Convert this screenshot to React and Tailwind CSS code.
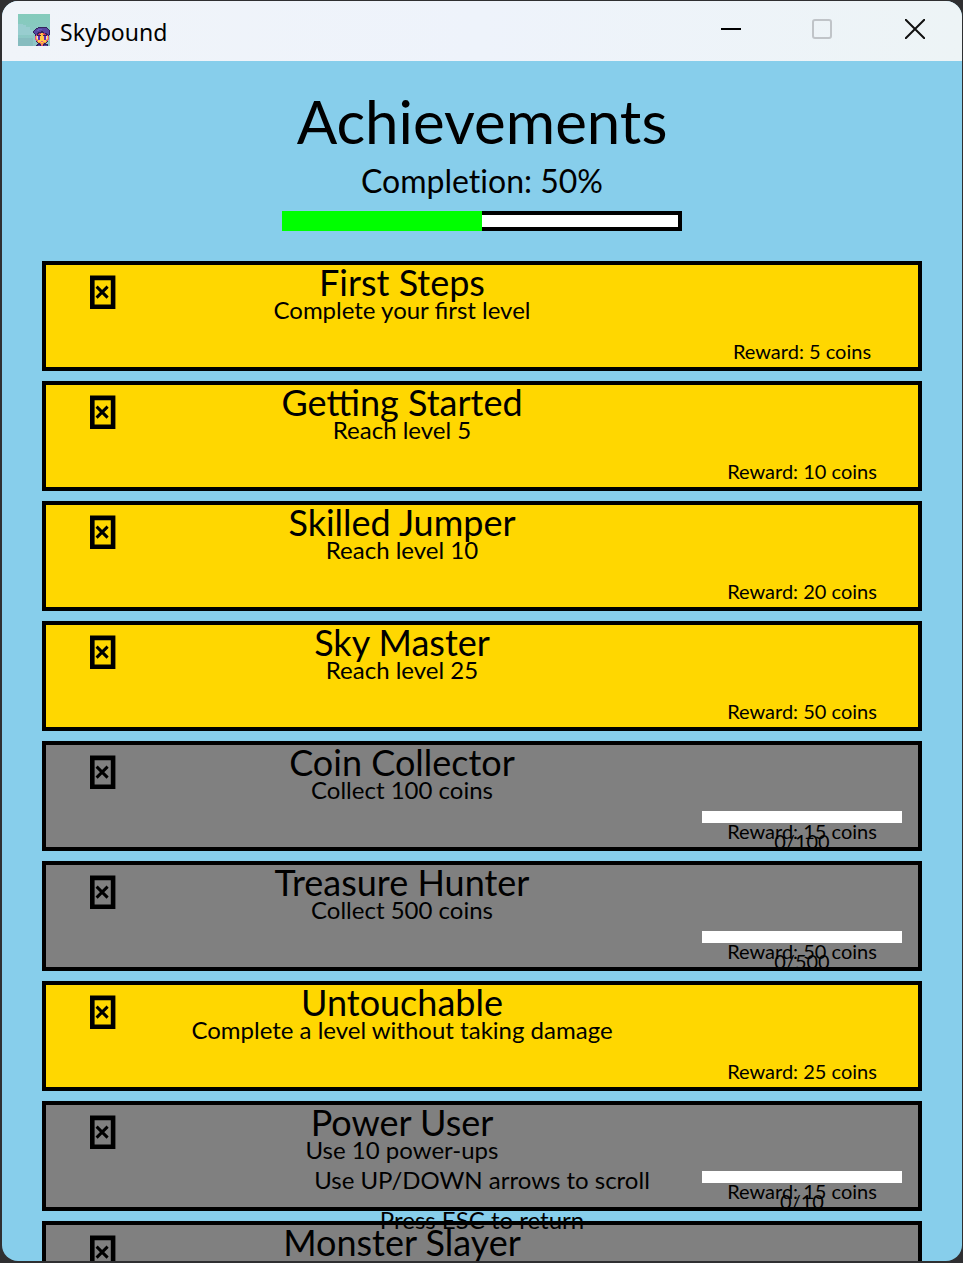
const ACHIEVEMENTS = [
  { title: "First Steps", text: "Complete your first level", reward: 5, done: true },
  { title: "Getting Started", text: "Reach level 5", reward: 10, done: true },
  { title: "Skilled Jumper", text: "Reach level 10", reward: 20, done: true },
  { title: "Sky Master", text: "Reach level 25", reward: 50, done: true },
  { title: "Coin Collector", text: "Collect 100 coins", reward: 15, goal: 100 },
  { title: "Treasure Hunter", text: "Collect 500 coins", reward: 50, goal: 500 },
  { title: "Untouchable", text: "Complete a level without taking damage", reward: 25, done: true },
  { title: "Power User", text: "Use 10 power-ups", reward: 15, goal: 10 },
  { title: "Monster Slayer", text: "", reward: null },
];

const SPRITE_COLORS = {
  d: "#33235c",
  h: "#5546a0",
  l: "#6b58b8",
  r: "#c9305e",
  y: "#ffc94a",
  o: "#f2963f",
  p: "#6230b0",
  w: "#e2cdf0",
  k: "#e0508a",
};

// Hero's head, one letter per pixel.
const SPRITE = [
  ".....ddddddddd...",
  "...ddhhhhhhhhhd..",
  "..dhhllllhhhhhhd.",
  ".dhhllhhhhhhhhhhd",
  "dhhhhhhhddhhhhhhd",
  "dhhhhddddddhhhhhd",
  ".dhhddrryyrrddhhd",
  "..dhdrryyoorrddhd",
  "..dkddddyyddddkd.",
  "..kywppyyyyppwyk.",
  "..kywppyyyyppwyk.",
  "..kywppyyyyppwyk.",
  "..koyppyyyyppyok.",
  "...kkyyyyyyyykk..",
  "...doyyykkyyyod..",
  "....doooyyoood...",
  ".....ddkookdd....",
  "....ddddooddddd..",
  "...ddhhdkkdhhhd..",
];

function AppIcon() {
  return (
    <svg viewBox="0 0 32 32" className="size-8" shapeRendering="crispEdges" aria-hidden="true">
      <defs>
        <linearGradient id="sky" x1="0" y1="0" x2="0" y2="1">
          <stop offset="0" stopColor="#84cbbb" />
          <stop offset="1" stopColor="#8fc6c9" />
        </linearGradient>
      </defs>
      <path fill="url(#sky)" d="M0 0h32v32H0z" />
      <path fill="#98cdcf" d="M0 10h5v1h3v2h4v3h3v5H0z" />
      <path fill="#86bcbf" d="M0 24h15v8H0z" />
      {SPRITE.map((row, y) =>
        [...row].map((cell, x) =>
          cell === "." ? null : (
            <rect key={x + "-" + y} x={15 + x} y={13 + y} width="1" height="1" fill={SPRITE_COLORS[cell]} />
          )
        )
      )}
    </svg>
  );
}

function MissingGlyph() {
  return (
    <svg viewBox="0 0 26 34" className="h-[34px] w-[26px]" fill="none" stroke="#000" aria-hidden="true">
      <path strokeWidth="4.6" d="M2.3 2.9h20.8v28.8H2.3z" />
      <path strokeWidth="3" d="M6.6 11.6l11 11M17.6 11.6l-11 11" />
    </svg>
  );
}

function Card({ title, text, reward, done, goal }) {
  return (
    <li
      className={
        "grid h-[110px] shrink-0 grid-cols-1 grid-rows-1 overflow-hidden border-4 border-black " +
        (done ? "bg-[#ffd700]" : "bg-[#808080]")
      }
    >
      <div className="col-start-1 row-start-1 ml-11 mt-[10px]">
        <MissingGlyph />
      </div>
      <div className="col-start-1 row-start-1 pr-[160px] text-center">
        <h2 className="h-8 text-4xl leading-[34px]">{title}</h2>
        <p className="text-2xl leading-[26px]">{text}</p>
      </div>
      {reward !== null && (
        <div className="col-start-1 row-start-1 mr-4 mt-[66px] w-[200px] justify-self-end text-center text-xl">
          <div className={"h-3 " + (goal ? "bg-white" : "")} />
          <p className="h-[10px] leading-4">Reward: {reward} coins</p>
          {goal && <p className="leading-4">0/{goal}</p>}
        </div>
      )}
    </li>
  );
}

export default function App() {
  return (
    <div className="h-screen bg-[#2f2f31] pb-[2px] pl-[2px] pr-px pt-px font-['Lato',sans-serif] text-black">
      <div className="flex h-full flex-col overflow-hidden rounded-2xl bg-[#87ceeb]">
        <header className="flex h-[60px] shrink-0 items-center justify-between bg-linear-to-r from-[#f0f4f9] via-[#eef3fb] to-[#edf4f6] pl-4 font-['Noto_Sans',sans-serif]">
          <div className="flex items-center gap-[10px] pb-[2px]">
            <AppIcon />
            <span className="pt-1 text-[23px] leading-7">Skybound</span>
          </div>
          <div className="flex h-full items-center pb-1">
            <button type="button" aria-label="Minimize" className="grid h-full w-[91px] place-items-center">
              <svg className="size-5" viewBox="0 0 20 20" aria-hidden="true">
                <path d="M0 9h20v2H0z" />
              </svg>
            </button>
            <button type="button" aria-label="Maximize" disabled className="grid h-full w-[91px] place-items-center">
              <svg className="size-5" viewBox="0 0 20 20" fill="none" stroke="#c0c4c8" strokeWidth="2" aria-hidden="true">
                <rect x="1" y="1" width="18" height="18" rx="2" />
              </svg>
            </button>
            <button type="button" aria-label="Close" className="grid h-full w-[95px] place-items-center">
              <svg className="size-5" viewBox="0 0 20 20" fill="none" stroke="#111" strokeWidth="2" aria-hidden="true">
                <path d="M0 0l20 20M20 0L0 20" />
              </svg>
            </button>
          </div>
        </header>
        <main className="grid min-h-0 flex-1 grid-cols-1 grid-rows-1">
          <div className="col-start-1 row-start-1 flex min-h-0 flex-col overflow-hidden px-10 pt-[30px]">
            <div className="flex flex-col items-center">
              <h1 className="text-6xl leading-[60px]">Achievements</h1>
              <p className="mt-[10px] text-[32px] leading-10 [font-variant-ligatures:none]" id="completion">
                Completion: 50%
              </p>
              <div
                role="progressbar"
                aria-labelledby="completion"
                aria-valuenow={50}
                className="mt-[10px] flex h-5 w-[400px]"
              >
                <div className="w-1/2 bg-[#00ff00]" />
                <div className="w-1/2 border-4 border-l-0 border-black bg-white" />
              </div>
            </div>
            <ul className="mt-[30px] flex flex-col gap-[10px]">
              {ACHIEVEMENTS.map((item) => (
                <Card key={item.title} {...item} />
              ))}
            </ul>
          </div>
          <div className="pointer-events-none col-start-1 row-start-1 self-end pb-[21px] text-center text-2xl leading-10">
            <p>Use UP/DOWN arrows to scroll</p>
            <p>Press ESC to return</p>
          </div>
        </main>
      </div>
    </div>
  );
}
